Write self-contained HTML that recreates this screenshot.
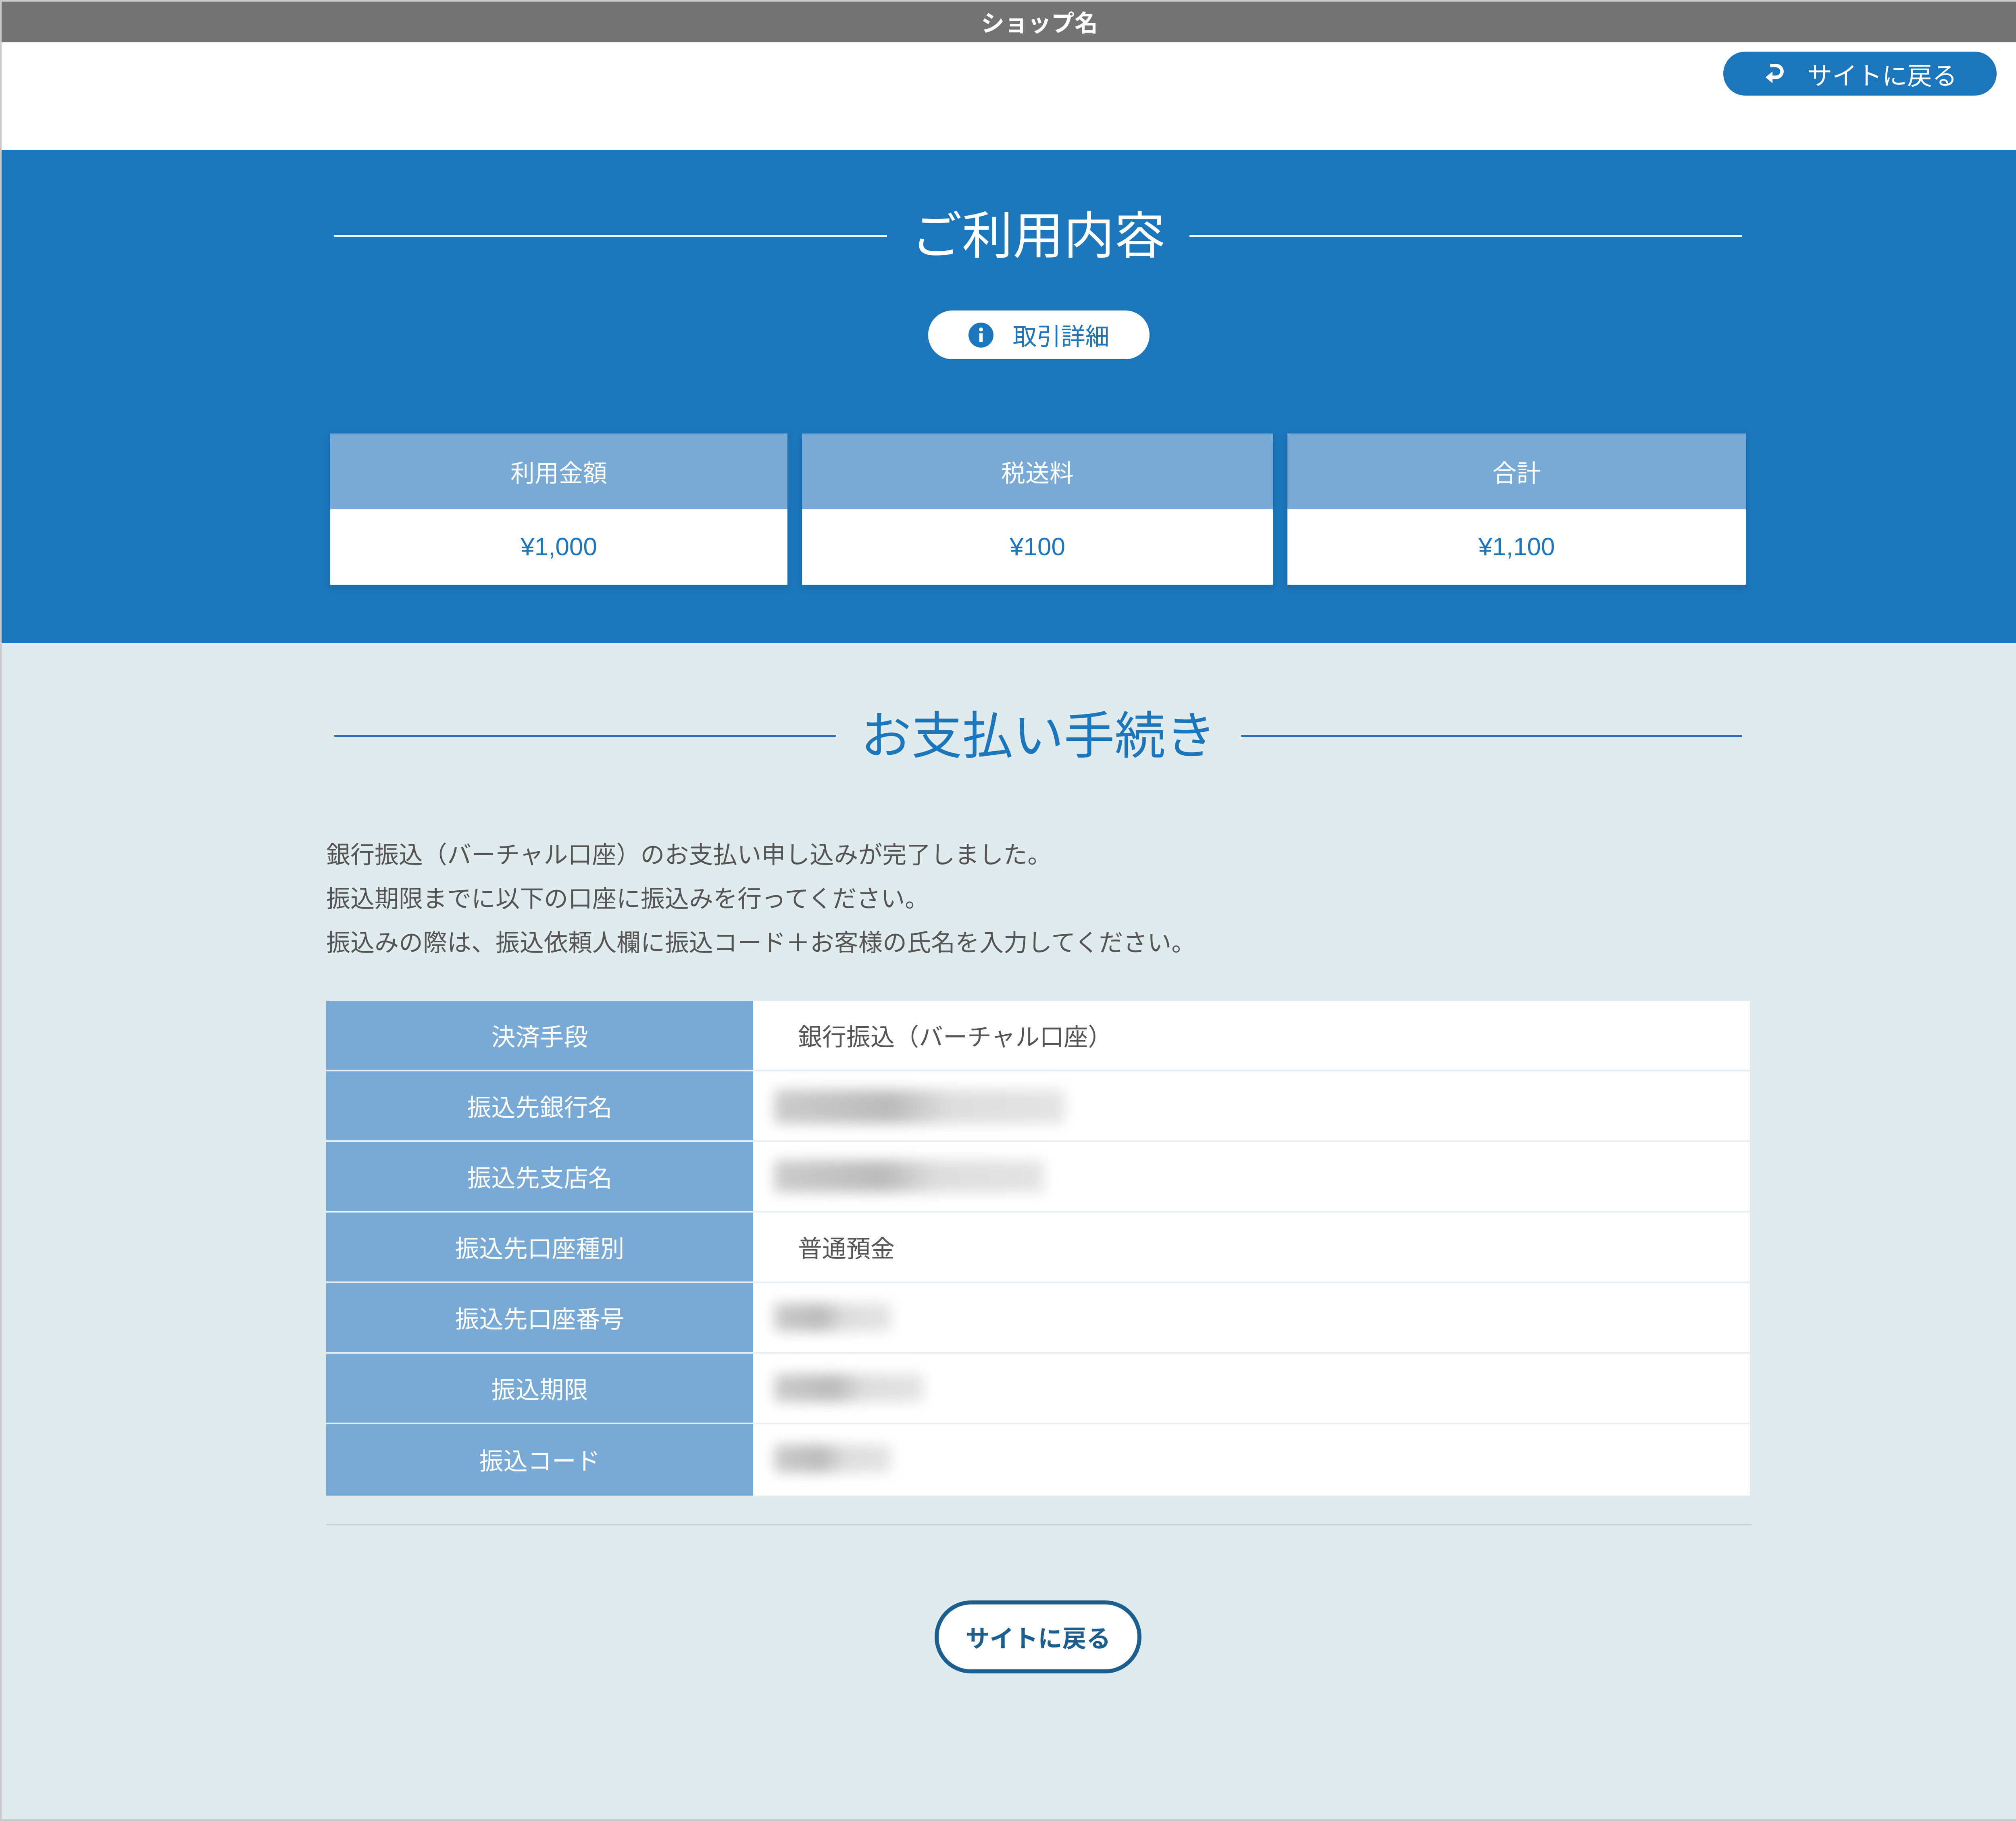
<!DOCTYPE html>
<html><head><meta charset="utf-8"><style>
*{margin:0;padding:0;box-sizing:border-box}
html,body{width:5156px;height:4516px}
body{position:relative;overflow:hidden;background:#e0ebee;font-family:"Liberation Sans","Noto Sans CJK JP",sans-serif}
.a{position:absolute}
.c{display:flex;align-items:center;justify-content:center}
.blur{position:absolute;background:linear-gradient(90deg,#ccc,#bbb 40%,#ddd 60%,#e4e4e4);filter:blur(16px);border-radius:10px}
</style></head><body>
<div class="a" style="left:0;top:0;width:5156px;height:4516px;border:4px solid #c8c8c8;z-index:5;pointer-events:none"></div>
<div class="a c" style="left:0;top:0;width:5156px;height:105px;background:#737373;color:#fff;font-weight:bold;font-size:58px">ショップ名</div>
<div class="a" style="left:0;top:105px;width:5156px;height:267px;background:#fff"></div>
<div class="a c" style="left:4274px;top:128px;width:678px;height:109px;background:#1c76bb;border-radius:55px;color:#fff;font-size:62px">
<svg width="60" height="70" viewBox="0 0 20 24" style="margin-right:50px"><path d="M6 5 H11 A5 5 0 0 1 11 15 H6" fill="none" stroke="#fff" stroke-width="3"/><path d="M2 15 L8 10 L8 20 Z" fill="#fff"/></svg>サイトに戻る</div>
<div class="a" style="left:0;top:372px;width:5156px;height:1223px;background:#1c76bb"></div>
<div class="a" style="left:828px;top:583px;width:1372px;height:4px;background:#fff"></div>
<div class="a" style="left:2950px;top:583px;width:1370px;height:4px;background:#fff"></div>
<div class="a c" style="left:2200px;top:490px;width:750px;height:170px;color:#fff;font-size:126px">ご利用内容</div>
<div class="a c" style="left:2302px;top:770px;width:549px;height:121px;background:#fff;border-radius:60px;color:#1c76bb;font-size:60px">
<svg width="62" height="62" viewBox="0 0 20 20" style="margin-right:48px"><circle cx="10" cy="10" r="10" fill="#1c76bb"/><circle cx="10" cy="5.5" r="1.6" fill="#fff"/><rect x="8.6" y="8.5" width="2.8" height="7" fill="#fff"/></svg>取引詳細</div>

<div class="a" style="left:819px;top:1075px;width:1134px;height:375px;background:#fff;box-shadow:0 6px 14px rgba(0,0,0,.15)"><div class="c" style="height:188px;background:#79aad6;color:#fff;font-size:60px">利用金額</div><div class="c" style="height:187px;color:#1c76bb;font-size:62px">¥1,000</div></div>
<div class="a" style="left:1989px;top:1075px;width:1168px;height:375px;background:#fff;box-shadow:0 6px 14px rgba(0,0,0,.15)"><div class="c" style="height:188px;background:#79aad6;color:#fff;font-size:60px">税送料</div><div class="c" style="height:187px;color:#1c76bb;font-size:62px">¥100</div></div>
<div class="a" style="left:3193px;top:1075px;width:1137px;height:375px;background:#fff;box-shadow:0 6px 14px rgba(0,0,0,.15)"><div class="c" style="height:188px;background:#79aad6;color:#fff;font-size:60px">合計</div><div class="c" style="height:187px;color:#1c76bb;font-size:62px">¥1,100</div></div>

<div class="a" style="left:828px;top:1823px;width:1245px;height:4px;background:#1c76bb"></div>
<div class="a" style="left:3078px;top:1823px;width:1242px;height:4px;background:#1c76bb"></div>
<div class="a c" style="left:2073px;top:1730px;width:1005px;height:170px;color:#1c76bb;font-size:126px">お支払い手続き</div>

<div class="a" style="left:809px;top:2066px;color:#555;font-size:60px;line-height:109px;white-space:nowrap">銀行振込（バーチャル口座）のお支払い申し込みが完了しました。<br>振込期限までに以下の口座に振込みを行ってください。<br>振込みの際は、振込依頼人欄に振込コード＋お客様の氏名を入力してください。</div>

<div class="a" style="left:809px;top:2482px;width:3531px;height:1227px;background:#fff">
<div style="position:absolute;left:0;top:0;width:1059px;height:1227px;background:#79aad6"></div>
</div>
<div class="a" style="left:809px;top:2482px;width:3531px;color:#555;font-size:60px">
<div style="display:flex;height:175px;border-bottom:4px solid #e6eff5"><div class="c" style="width:1059px;color:#fff">決済手段</div><div style="display:flex;align-items:center;padding-left:111px">銀行振込（バーチャル口座）</div></div>
<div style="display:flex;height:175px;border-bottom:4px solid #e6eff5;position:relative"><div class="c" style="width:1059px;color:#fff">振込先銀行名</div><div class="blur" style="left:1111px;top:45px;width:720px;height:85px"></div></div>
<div style="display:flex;height:175px;border-bottom:4px solid #e6eff5;position:relative"><div class="c" style="width:1059px;color:#fff">振込先支店名</div><div class="blur" style="left:1111px;top:45px;width:670px;height:80px"></div></div>
<div style="display:flex;height:175px;border-bottom:4px solid #e6eff5"><div class="c" style="width:1059px;color:#fff">振込先口座種別</div><div style="display:flex;align-items:center;padding-left:111px">普通預金</div></div>
<div style="display:flex;height:175px;border-bottom:4px solid #e6eff5;position:relative"><div class="c" style="width:1059px;color:#fff">振込先口座番号</div><div class="blur" style="left:1111px;top:50px;width:290px;height:70px"></div></div>
<div style="display:flex;height:175px;border-bottom:4px solid #e6eff5;position:relative"><div class="c" style="width:1059px;color:#fff">振込期限</div><div class="blur" style="left:1111px;top:50px;width:370px;height:70px"></div></div>
<div style="display:flex;height:175px;position:relative"><div class="c" style="width:1059px;color:#fff">振込コード</div><div class="blur" style="left:1111px;top:50px;width:290px;height:70px"></div></div>
</div>

<div class="a" style="left:809px;top:3779px;width:3535px;height:4px;background:#c9d2d6"></div>
<div class="a c" style="left:2318px;top:3969px;width:513px;height:181px;background:#fff;border:10px solid #1c5f8f;border-radius:90px;color:#1c5f8f;font-weight:bold;font-size:60px">サイトに戻る</div>
</body></html>
